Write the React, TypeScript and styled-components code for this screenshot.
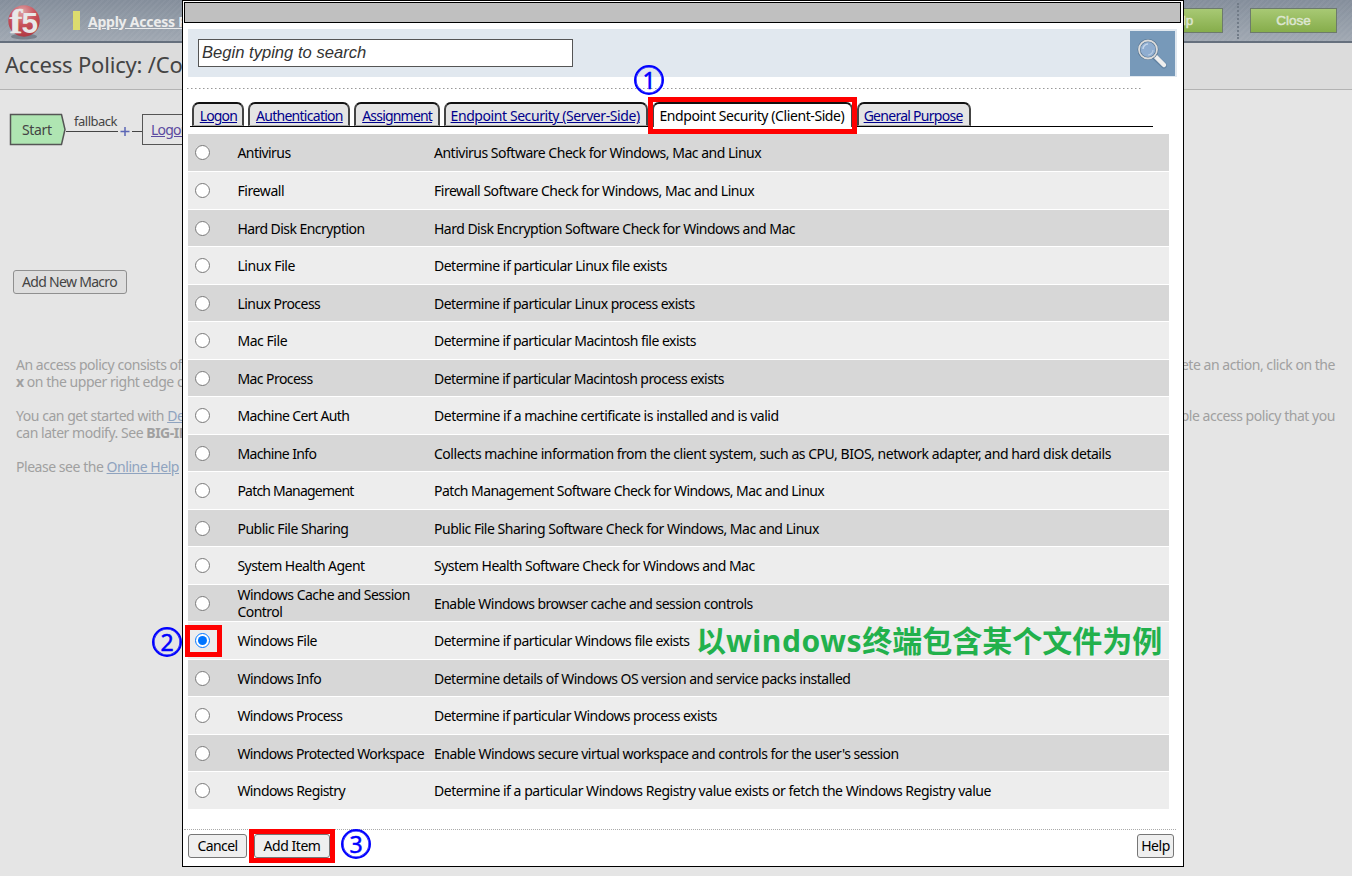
import React from "react";
import styled, { createGlobalStyle } from "styled-components";

const Global = createGlobalStyle`
  * { box-sizing: border-box; }
  html, body { margin: 0; height: 876px; overflow: hidden; background: #e5e5e5; }
  body { font-family: "Noto Sans", "Noto Sans CJK SC", sans-serif; font-size: 14px; }
`;

const Page = styled.div`
  position: relative;
  width: 1352px;
  height: 876px;
  overflow: hidden;
  background: #e5e5e5;
`;
const TopBar = styled.header`
  display: flex;
  align-items: center;
  height: 43px;
  padding: 0 15px 0 7px;
  border-bottom: 2px solid #66707d;
  background: repeating-linear-gradient(135deg, #ffffff0a 0 2px, transparent 2px 4px),
    linear-gradient(#848e9b, #a0a8b2);
`;
const Marker = styled.i`
  width: 7px;
  height: 19px;
  margin: 0 8px 0 32px;
  background: #dcdc6e;
`;
const ApplyLink = styled.a`
  margin-top: 2px;
  color: #ececec;
  font-weight: bold;
  letter-spacing: -0.24px;
  text-decoration: underline;
  white-space: nowrap;
`;
const GreenButton = styled.button`
  width: 87px;
  height: 25px;
  padding: 0;
  border: 1px solid #6d7a6c;
  background: linear-gradient(#a8c974, #86ad4b);
  color: #dde6d0;
  font: 13.5px "Liberation Sans", sans-serif;
  -webkit-text-stroke: 0.5px #dde6d0;
`;
const TopActions = styled.div`
  display: flex;
  align-items: center;
  margin-left: auto;
`;
const Divider = styled.i`
  height: 36px;
  margin: 0 11px 0 14px;
  border-left: 2px dotted #717b87;
`;
const TitleBar = styled.div`
  height: 47px;
  padding: 6px 5px;
  border-bottom: 1px solid #b3b3b3;
  background: #dcdcdc;
  color: #444;
  font-size: 22px;
  line-height: 31px;
  letter-spacing: -0.2px;
  white-space: nowrap;
`;
const Flow = styled.div`
  display: flex;
  align-items: center;
  height: 79px;
  padding-left: 9px;
`;
const Connector = styled.div`
  display: flex;
  flex-direction: column;
  align-items: center;
  width: 76px;
  height: 33px;
  color: #444;
  font-size: 13px;
  line-height: 17px;
  letter-spacing: -0.5px;
  span { margin-right: 17px; }
  svg { margin-top: -4px; }
`;
const LogonNode = styled.a`
  width: 90px;
  height: 31px;
  padding-left: 8px;
  border: 1px solid #555;
  color: #5b4aa0;
  line-height: 29px;
  letter-spacing: -0.8px;
  text-decoration: underline;
`;
const MacroButton = styled.button`
  display: block;
  width: 114px;
  height: 24px;
  margin: 101px 0 0 13px;
  padding: 0 1px 1px 0;
  border: 1px solid #8f8f8f;
  border-radius: 3px;
  background: #dedede;
  color: #444;
  font: inherit;
  letter-spacing: -0.7px;
`;
const Intro = styled.div`
  display: flex;
  flex-direction: column;
  gap: 17px;
  margin: 62px 17px 0 16px;
  color: #a0a0a0;
  line-height: 17px;
  letter-spacing: -0.46px;
`;
const Line = styled.div`
  display: flex;
  justify-content: space-between;
  white-space: nowrap;
  a { color: #8fa3bf; text-decoration: underline; }
`;

const Dialog = styled.section`
  position: absolute;
  left: 182px;
  top: 0;
  width: 1002px;
  height: 867px;
  padding: 1px;
  border: 1px solid #000;
  background: #fff;
  color: #000;
`;
const DialogTitle = styled.div`
  width: 997px;
  height: 21px;
  border: 1px solid #000;
  background: #c0c0c0;
`;
const SearchBand = styled.div`
  display: flex;
  align-items: center;
  justify-content: space-between;
  width: 989px;
  height: 48px;
  margin: 6px 0 0 4px;
  padding: 0 2px 0 10px;
  background: #e1e8ef;
`;
const SearchInput = styled.input`
  width: 375px;
  height: 28px;
  padding: 0 3px;
  border: 1px solid #555;
  border-radius: 0;
  font: italic 16.6px "Liberation Sans", sans-serif;
  &::placeholder { color: #333; opacity: 1; }
`;
const SearchIcon = styled.div`
  width: 45px;
  height: 45px;
  background: #7799b9;
`;
const DottedRule = styled.div`
  width: 954px;
  height: 1px;
  margin: 11px 0 0 3px;
  background: repeating-linear-gradient(90deg, #999 0 1px, #ccc 1px 2px, transparent 2px 4px);
`;
const Tabs = styled.nav`
  display: flex;
  align-items: flex-end;
  gap: 4px;
  width: 963px;
  height: 38px;
  margin-left: 6px;
  padding-left: 2.4px;
  border-bottom: 1px solid #000;
`;
const Tab = styled.a<{ $w: number; $ls: number; $active?: boolean }>`
  flex: none;
  width: ${(p) => p.$w}px;
  height: ${(p) => (p.$active ? 25 : 24)}px;
  margin-bottom: ${(p) => (p.$active ? -1 : 0)}px;
  padding-right: ${(p) => (p.$w > 110 ? 2 : 0)}px;
  border: 2px solid #444;
  border-top-color: #111;
  border-bottom: ${(p) => (p.$active ? "0" : "1px solid #aaa")};
  border-radius: 7px 7px 0 0;
  background: ${(p) => (p.$active ? "#fff" : "#e4e4e4")};
  color: ${(p) => (p.$active ? "#000" : "#00008b")};
  line-height: 24px;
  letter-spacing: ${(p) => p.$ls}px;
  text-align: center;
  text-decoration: ${(p) => (p.$active ? "none" : "underline")};
  white-space: nowrap;
`;
const List = styled.div`
  display: grid;
  grid-template-rows: 37px;
  grid-auto-rows: 36.5px;
  row-gap: 1px;
  width: 981px;
  margin: 7px 0 0 4px;
`;
const Row = styled.label`
  display: grid;
  grid-template-columns: 49.4px 196.6px 1fr;
  align-items: center;
  padding-top: 0.6px;
  line-height: 17px;
  background: #ededed;
  &:nth-child(odd) { background: #d7d7d7; }
`;
const Radio = styled.input`
  width: 15px;
  height: 15px;
  margin: 0 0 0 7px;
`;
const Cell = styled.span<{ $ls: number }>`
  letter-spacing: ${(p) => p.$ls}px;
  white-space: pre;
`;
const Footer = styled.footer`
  display: flex;
  gap: 7px;
  width: 992px;
  margin-top: 20.5px;
  padding: 4px 2px 0 4px;
  border-top: 1px dotted #aaa;
`;
const Button = styled.button<{ $w: number; $ls: number }>`
  width: ${(p) => p.$w}px;
  height: 24px;
  padding: 0 0 1px;
  border: 1px solid #767676;
  border-radius: 3px;
  background: #efefef;
  color: #000;
  font: inherit;
  letter-spacing: ${(p) => p.$ls}px;
  white-space: nowrap;
  &:last-child { margin-left: auto; }
`;

const Highlight = styled.div<{ $x: number; $y: number; $w: number; $h: number }>`
  position: absolute;
  left: ${(p) => p.$x}px;
  top: ${(p) => p.$y}px;
  width: ${(p) => p.$w}px;
  height: ${(p) => p.$h}px;
  border: 5px solid #f00;
`;
const Step = styled.div<{ $x: number; $y: number }>`
  position: absolute;
  left: ${(p) => p.$x}px;
  top: ${(p) => p.$y}px;
  width: 30px;
  height: 30px;
  border: 2px solid #00f;
  border-radius: 50%;
  box-shadow: inset 0 0 0 0.6px #00f;
  color: #00f;
  font-size: 23px;
  line-height: 26px;
  text-align: center;
  -webkit-text-stroke: 0.5px #00f;
`;
const Note = styled.div`
  position: absolute;
  left: 696px;
  top: 619px;
  color: #22b14c;
  font: bold 30px/44px "Noto Sans", "Noto Sans CJK SC", sans-serif;
  white-space: nowrap;
  span { letter-spacing: 0.6px; }
`;

const tabs: [string, number, number, boolean?][] = [
  ["Logon", 52, -0.85],
  ["Authentication", 102, -0.72],
  ["Assignment", 85.5, -0.8],
  ["Endpoint Security (Server-Side)", 204.5, -0.42],
  ["Endpoint Security (Client-Side)", 201, -0.41, true],
  ["General Purpose", 113.5, -0.72],
];

const rows: [string, string, number, number][] = [
  ["Antivirus", "Antivirus Software Check for Windows, Mac and Linux", -0.55, -0.49],
  ["Firewall", "Firewall Software Check for Windows, Mac and Linux", -0.4, -0.48],
  ["Hard Disk Encryption", "Hard Disk Encryption Software Check for Windows and Mac", -0.55, -0.51],
  ["Linux File", "Determine if particular Linux file exists", -0.4, -0.49],
  ["Linux Process", "Determine if particular Linux process exists", -0.53, -0.52],
  ["Mac File", "Determine if particular Macintosh file exists", -0.45, -0.53],
  ["Mac Process", "Determine if particular Macintosh process exists", -0.56, -0.55],
  ["Machine Cert Auth", "Determine if a machine certificate is installed and is valid", -0.61, -0.47],
  ["Machine Info", "Collects machine information from the client system, such as CPU, BIOS, network adapter, and hard disk details", -0.62, -0.47],
  ["Patch Management", "Patch Management Software Check for Windows, Mac and Linux", -0.78, -0.56],
  ["Public File Sharing", "Public File Sharing Software Check for Windows, Mac and Linux", -0.48, -0.48],
  ["System Health Agent", "System Health Software Check for Windows and Mac", -0.54, -0.52],
  ["Windows Cache and Session\nControl", "Enable Windows browser cache and session controls", -0.52, -0.53],
  ["Windows File", "Determine if particular Windows file exists", -0.53, -0.5],
  ["Windows Info", "Determine details of Windows OS version and service packs installed", -0.53, -0.5],
  ["Windows Process", "Determine if particular Windows process exists", -0.6, -0.54],
  ["Windows Protected Workspace", "Enable Windows secure virtual workspace and controls for the user's session", -0.61, -0.51],
  ["Windows Registry", "Determine if a particular Windows Registry value exists or fetch the Windows Registry value", -0.58, -0.475],
];

const Logo = () => (
  <svg width="34" height="38" viewBox="0 0 34 38">
    <defs>
      <radialGradient id="ball" cx="45%" cy="20%" r="80%">
        <stop offset="0" stopColor="#dda3a6" />
        <stop offset="0.5" stopColor="#c9535c" />
        <stop offset="1" stopColor="#b03a45" />
      </radialGradient>
    </defs>
    <ellipse cx="17" cy="34.500" rx="13" ry="3" fill="#5f6873" opacity=".6" />
    <circle cx="17" cy="19" r="15.700" fill="url(#ball)" />
    <text x="2.500" y="31" fontFamily="Liberation Serif, serif" fontWeight="bold" fontSize="33" fill="#e8e8e8" stroke="#e8e8e8" strokeWidth=".4" textLength="13" lengthAdjust="spacingAndGlyphs">f</text>
    <text x="14.500" y="31" fontFamily="Liberation Sans, sans-serif" fontWeight="bold" fontSize="30" fill="#e8e8e8" textLength="16.500" lengthAdjust="spacingAndGlyphs">5</text>
  </svg>
);

const Magnifier = () => (
  <svg width="45" height="45" viewBox="0 0 45 45">
    <path d="M24 25 34 34.500" stroke="#4f6f8e" strokeWidth="6" strokeLinecap="round" opacity=".5" />
    <path d="M25 25 34 34" stroke="#eee" strokeWidth="4.500" strokeLinecap="round" />
    <circle cx="18" cy="18.500" r="9" fill="#8fadd0" stroke="#55738f" strokeWidth="3" />
    <circle cx="18" cy="18.500" r="9" fill="none" stroke="#dcdcdc" strokeWidth="1.800" />
    <path d="M13 18a5 5 0 0 1 5-5" stroke="#c5d6ea" strokeWidth="1.500" fill="none" />
    <path d="M23 19a5 5 0 0 1-5 5" stroke="#b5cae2" strokeWidth="1.200" fill="none" />
  </svg>
);

export default function App() {
  return (
    <Page>
      <Global />
      <TopBar>
        <Logo />
        <Marker />
        <ApplyLink>Apply Access Policy</ApplyLink>
        <TopActions>
          <GreenButton>Help</GreenButton>
          <Divider />
          <GreenButton>Close</GreenButton>
        </TopActions>
      </TopBar>
      <TitleBar>Access Policy: /Common</TitleBar>
      <Flow>
        <svg width="57" height="33" viewBox="0 0 57 33">
          <path d="M1.500 1.500H52.500L56 16.500 52.500 31.500H1.500Z" fill="#afe5b2" stroke="#555" strokeWidth="1.500" />
          <text x="13" y="21.500" fontSize="14" fill="#444" textLength="30">Start</text>
        </svg>
        <Connector>
          <span>fallback</span>
          <svg width="76" height="13" viewBox="0 -3 76 13">
            <path d="M0 2.500H52M66 2.500H76" stroke="#444" />
            <path d="M54.500 2.500H63.500M59 -2V7" stroke="#5b66b5" strokeWidth="1.500" />
          </svg>
        </Connector>
        <LogonNode>Logon</LogonNode>
      </Flow>
      <MacroButton>Add New Macro</MacroButton>
      <Intro>
        <div>
          <Line><span>An access policy consists of</span><span>To delete an action, click on the</span></Line>
          <Line><span><b>x</b> on the upper right edge of</span></Line>
        </div>
        <div>
          <Line><span>You can get started with <a>De</a></span><span>simple access policy that you</span></Line>
          <Line><span>can later modify. See <b>BIG-IP</b></span></Line>
        </div>
        <Line><span>Please see the <a>Online Help</a></span></Line>
      </Intro>

      <Dialog>
        <DialogTitle />
        <SearchBand>
          <SearchInput placeholder="Begin typing to search" />
          <SearchIcon><Magnifier /></SearchIcon>
        </SearchBand>
        <DottedRule />
        <Tabs>
          {tabs.map(([name, w, ls, active]) => (
            <Tab key={name} $w={w} $ls={ls} $active={active}>{name}</Tab>
          ))}
        </Tabs>
        <List>
          {rows.map(([name, text, nameSpacing, textSpacing]) => (
            <Row key={name}>
              <Radio type="radio" name="item" defaultChecked={name === "Windows File"} />
              <Cell $ls={nameSpacing}>{name}</Cell>
              <Cell $ls={textSpacing}>{text}</Cell>
            </Row>
          ))}
        </List>
        <Footer>
          <Button $w={59} $ls={-0.6}>Cancel</Button>
          <Button $w={76} $ls={-0.45}>Add Item</Button>
          <Button $w={37} $ls={-0.5}>Help</Button>
        </Footer>
      </Dialog>

      <Highlight $x={648} $y={97} $w={209} $h={37} />
      <Highlight $x={185} $y={625} $w={37} $h={32} />
      <Highlight $x={249} $y={829} $w={86} $h={34} />
      <Step $x={634} $y={65}>1</Step>
      <Step $x={152} $y={627}>2</Step>
      <Step $x={341} $y={829}>3</Step>
      <Note>以<span>windows</span>终端包含某个文件为例</Note>
    </Page>
  );
}
